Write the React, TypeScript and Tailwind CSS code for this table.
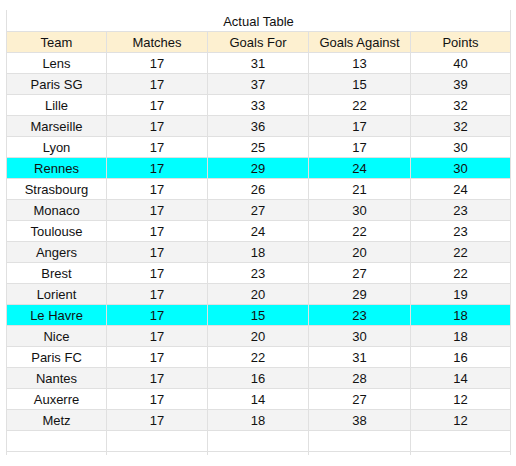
import React from "react";

const rows: [string, number, number, number, number][] = [
  ["Lens", 17, 31, 13, 40],
  ["Paris SG", 17, 37, 15, 39],
  ["Lille", 17, 33, 22, 32],
  ["Marseille", 17, 36, 17, 32],
  ["Lyon", 17, 25, 17, 30],
  ["Rennes", 17, 29, 24, 30],
  ["Strasbourg", 17, 26, 21, 24],
  ["Monaco", 17, 27, 30, 23],
  ["Toulouse", 17, 24, 22, 23],
  ["Angers", 17, 18, 20, 22],
  ["Brest", 17, 23, 27, 22],
  ["Lorient", 17, 20, 29, 19],
  ["Le Havre", 17, 15, 23, 18],
  ["Nice", 17, 20, 30, 18],
  ["Paris FC", 17, 22, 31, 16],
  ["Nantes", 17, 16, 28, 14],
  ["Auxerre", 17, 14, 27, 12],
  ["Metz", 17, 18, 38, 12],
];

const highlight = new Set(["Rennes", "Le Havre"]);

function Row({ cells, bg }: { cells: (string | number)[]; bg: string }) {
  return (
    <div className={`grid grid-cols-[101px_101px_101px_102px_100px] h-[21px] ${bg}`}>
      {cells.map((c, i) => (
        <div
          key={i}
          className={`flex items-center justify-center border-b border-r border-[#e0e0e0] ${i === 0 ? "border-l" : ""}`}
        >
          {c}
        </div>
      ))}
    </div>
  );
}

export default function App() {
  return (
    <div
      className="w-[516px] h-[466px] bg-white pt-[10px] pl-[6px] text-[13px] text-[#111111] leading-none"
      style={{ fontFamily: '"Liberation Sans", Arial, sans-serif' }}
    >
      <div className="w-[505px] h-[445px] overflow-hidden">
        <div className="h-[21px] flex items-center justify-center border-l border-r border-[#e0e0e0] pt-[1px]">
          Actual Table
        </div>
        <div className="border-t border-[#e0e0e0]">
          <Row cells={["Team", "Matches", "Goals For", "Goals Against", "Points"]} bg="bg-[#fdf0d0]" />
        </div>
        {rows.map((r, i) => (
          <Row
            key={r[0]}
            cells={r}
            bg={highlight.has(r[0]) ? "bg-[#00ffff]" : i % 2 === 1 ? "bg-[#f3f3f3]" : "bg-white"}
          />
        ))}
        <Row cells={["", "", "", "", ""]} bg="bg-white" />
        <Row cells={["", "", "", "", ""]} bg="bg-white" />
      </div>
    </div>
  );
}
